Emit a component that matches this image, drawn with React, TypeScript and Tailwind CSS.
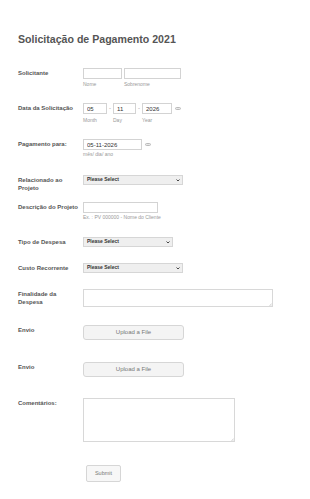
import React from 'react';

const font = { fontFamily: '"Liberation Sans", Arial, sans-serif' };

const Label = ({ children }: { children: React.ReactNode }) => (
  <div className="w-[65px] shrink-0 pt-[1px] text-[6px] leading-[8px] font-bold text-[#555]">{children}</div>
);

const Sub = ({ children, className = '' }: { children: React.ReactNode; className?: string }) => (
  <div className={`text-[5px] leading-[6px] text-[#999] ${className}`}>{children}</div>
);

const Field = ({ w, value = '' }: { w: string; value?: string }) => (
  <input
    readOnly
    defaultValue={value}
    className={`${w} block h-[11px] border border-[#d3d3d3] bg-white pl-[3px] text-[6px] text-[#333] outline-none`}
  />
);

const Calendar = () => (
  <span className="ml-[3px] inline-block h-[3px] w-[6px] rounded-full border border-[#bbb] bg-[#e8e8e8]" />
);

const Select = ({ w }: { w: string }) => (
  <div
    className={`${w} flex h-[10px] items-center justify-between border border-[#d6d6d6] bg-[#efefef] pl-[3px] pr-[2px] text-[5px] font-bold text-[#333]`}
  >
    <span>Please Select</span>
    <svg width="4" height="3" viewBox="0 0 8 6">
      <path d="M1 1l3 3 3-3" fill="none" stroke="#333" strokeWidth="1.8" />
    </svg>
  </div>
);

const Area = ({ w, h }: { w: string; h: string }) => (
  <div className={`relative ${w} ${h}`}>
    <textarea readOnly className="block h-full w-full resize-none border border-[#d8d8d8] bg-white outline-none" />
    <svg className="absolute right-[1px] bottom-[1px]" width="3" height="3" viewBox="0 0 6 6">
      <path d="M5.5 1L1 5.5M5.5 3.5L3.5 5.5" stroke="#aaa" strokeWidth="1" />
    </svg>
  </div>
);

const Upload = () => (
  <button className="block h-[15.5px] w-[101px] rounded-[3px] border border-[#d6d6d6] bg-[#f4f4f4] text-[6px] text-[#777]">
    Upload a File
  </button>
);

export default function App() {
  return (
    <div className="min-h-[499px] w-[310px] bg-white pl-[18px]" style={font}>
      <h1 className="pt-[32px] text-[10.6px] leading-[14px] font-bold text-[#555]">Solicitação de Pagamento 2021</h1>

      {/* Solicitante */}
      <div className="mt-[22px] flex">
        <Label>Solicitante</Label>
        <div className="flex gap-[2px]">
          <div>
            <Field w="w-[39px]" />
            <Sub className="mt-[2px]">Nome</Sub>
          </div>
          <div>
            <Field w="w-[57px]" />
            <Sub className="mt-[2px]">Sobrenome</Sub>
          </div>
        </div>
      </div>

      {/* Data da Solicitação */}
      <div className="mt-[16px] flex">
        <Label>Data da Solicitação</Label>
        <div className="flex">
          <div>
            <Field w="w-[24px]" value="05" />
            <Sub className="mt-[2.5px]">Month</Sub>
          </div>
          <span className="w-[6px] text-center text-[6px] leading-[11px] text-[#999]">-</span>
          <div>
            <Field w="w-[23px]" value="11" />
            <Sub className="mt-[2.5px]">Day</Sub>
          </div>
          <span className="w-[6px] text-center text-[6px] leading-[11px] text-[#999]">-</span>
          <div>
            <Field w="w-[30px]" value="2026" />
            <Sub className="mt-[2.5px]">Year</Sub>
          </div>
          <div className="flex h-[11px] items-center">
            <Calendar />
          </div>
        </div>
      </div>

      {/* Pagamento para */}
      <div className="mt-[16.5px] flex">
        <Label>Pagamento para:</Label>
        <div>
          <div className="flex items-center">
            <Field w="w-[58.5px]" value="05-11-2026" />
            <Calendar />
          </div>
          <Sub className="mt-[1px]">mês/ dia/ ano</Sub>
        </div>
      </div>

      {/* Relacionado ao Projeto */}
      <div className="mt-[18px] flex">
        <Label>
          Relacionado ao
          <br />
          Projeto
        </Label>
        <Select w="w-[99.5px]" />
      </div>

      {/* Descrição do Projeto */}
      <div className="mt-[10px] flex">
        <Label>Descrição do Projeto</Label>
        <div>
          <input
            readOnly
            className="block h-[10.5px] w-[74.5px] border border-[#d3d3d3] bg-white outline-none"
          />
          <Sub className="mt-[1.5px]">Ex. : PV 000000 - Nome do Cliente</Sub>
        </div>
      </div>

      {/* Tipo de Despesa */}
      <div className="mt-[17px] flex">
        <Label>Tipo de Despesa</Label>
        <Select w="w-[90px]" />
      </div>

      {/* Custo Recorrente */}
      <div className="mt-[16px] flex">
        <Label>Custo Recorrente</Label>
        <Select w="w-[99.5px]" />
      </div>

      {/* Finalidade da Despesa */}
      <div className="mt-[16px] flex">
        <Label>
          Finalidade da
          <br />
          Despesa
        </Label>
        <Area w="w-[190px]" h="h-[18px]" />
      </div>

      {/* Envio */}
      <div className="mt-[17.5px] flex">
        <Label>Envio</Label>
        <Upload />
      </div>

      <div className="mt-[21.5px] flex">
        <Label>Envio</Label>
        <Upload />
      </div>

      {/* Comentários */}
      <div className="mt-[21px] flex">
        <Label>Comentários:</Label>
        <Area w="w-[152px]" h="h-[43.5px]" />
      </div>

      <div className="mt-[23.5px] flex pl-[68px]">
        <button className="h-[16.5px] w-[35px] rounded-[2px] border border-[#d6d6d6] bg-[#f7f7f7] text-[5.5px] text-[#777]">
          Submit
        </button>
      </div>
    </div>
  );
}
